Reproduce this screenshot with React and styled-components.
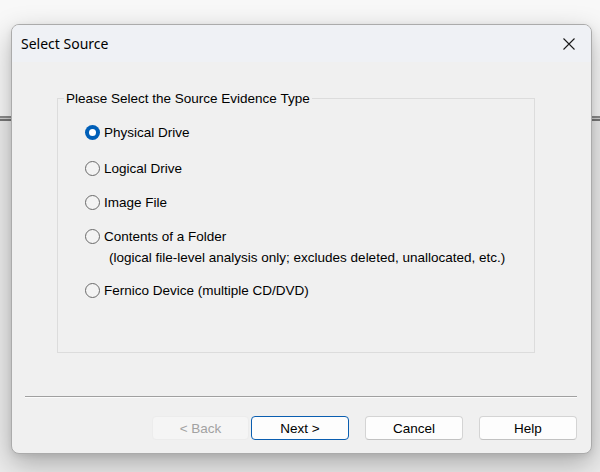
import React, { useState } from 'react';
import styled, { createGlobalStyle } from 'styled-components';

const GlobalStyle = createGlobalStyle`
    html, body {
        margin: 0;
        padding: 0;
    }
    body {
        font-family: "Liberation Sans", Arial, sans-serif;
        font-size: 13.5px;
        color: #000;
    }
`;

const Desktop = styled.div`
    width: 600px;
    height: 472px;
    box-sizing: border-box;
    padding: 24px 0 0 11px;
    overflow: hidden;
    background: linear-gradient(
        #f8f8f8 0 116px,
        #8c8c8c 116px 118px,
        #d2d2d2 118px 119px,
        #777 119px 121px,
        #ececec 121px 100%
    );
`;

const Dialog = styled.div`
    width: 581px;
    height: 430px;
    box-sizing: border-box;
    border: 1px solid #ababab;
    border-radius: 8px;
    background: #f0f0f0;
    box-shadow: 0 10px 28px rgba(0, 0, 0, 0.28), 0 2px 6px rgba(0, 0, 0, 0.08);
    display: flex;
    flex-direction: column;
    overflow: hidden;
`;

const TitleBar = styled.div`
    height: 37px;
    flex: none;
    display: flex;
    align-items: center;
    justify-content: space-between;
    padding: 0 15px 0 9px;
    background: #eff1f5;
`;

const Title = styled.span`
    font-family: "Noto Sans", "Open Sans", sans-serif;
    font-size: 14px;
    color: #000;
`;

const CloseButton = styled.button`
    width: 14px;
    height: 14px;
    padding: 0;
    border: none;
    background: none;
    display: flex;
    align-items: center;
    justify-content: center;
    cursor: pointer;
`;

const GroupBox = styled.fieldset`
    margin: 29px 56px 0 45px;
    padding: 0;
    height: 262px;
    box-sizing: border-box;
    border: 1px solid #dcdcdc;
    min-width: 0;
`;

const GroupTitle = styled.legend`
    margin-left: 6px;
    padding: 0 2px;
    line-height: 15px;
    font-size: 13.5px;
`;

const OptionList = styled.div`
    display: flex;
    flex-direction: column;
    padding: 16px 0 0 27px;
`;

const Option = styled.label`
    display: flex;
    flex-direction: column;
    margin-top: ${(p) => p.$space}px;
    cursor: default;
`;

const OptionRow = styled.span`
    display: flex;
    align-items: center;
    height: 20px;
    gap: 4px;
`;

const RadioCircle = styled.span`
    width: 15px;
    height: 15px;
    box-sizing: border-box;
    border-radius: 50%;
    flex: none;
    display: flex;
    align-items: center;
    justify-content: center;
    border: ${(p) => (p.$checked ? 'none' : '1px solid #6a6a6a')};
    background: ${(p) => (p.$checked ? '#005fb8' : '#f3f3f3')};

    &::after {
        content: '';
        display: ${(p) => (p.$checked ? 'block' : 'none')};
        width: 7px;
        height: 7px;
        border-radius: 50%;
        background: #fff;
    }
`;

const OptionNote = styled.span`
    display: block;
    height: 20px;
    line-height: 20px;
    margin-top: 2px;
    padding-left: 24px;
`;

const Separator = styled.div`
    margin: 43px 14px 0 13px;
    height: 0;
    border-top: 1px solid #a0a0a0;
    border-bottom: 1px solid #fbfbfb;
`;

const ButtonRow = styled.div`
    display: flex;
    justify-content: flex-end;
    margin-top: 18px;
    padding-right: 14px;
`;

const DialogButton = styled.button`
    width: ${(p) => p.$w || 98}px;
    height: 24px;
    margin-left: ${(p) => p.$gap || 0}px;
    box-sizing: border-box;
    border-radius: 4px;
    font-family: "Liberation Sans", Arial, sans-serif;
    font-size: 13.5px;
    padding: 0;
    color: #000;
    background: #fdfdfd;
    border: 1px solid #d4d4d4;
    border-bottom-color: #c2c2c2;

    ${(p) => p.$primary && `
        border: 1px solid #0a5eb0;
    `}

    &:disabled {
        background: #f5f5f5;
        border-color: #ececec;
        color: #a2a2a2;
    }
`;

const options = [
    { id: 'physical', label: 'Physical Drive', space: 0 },
    { id: 'logical', label: 'Logical Drive', space: 16 },
    { id: 'image', label: 'Image File', space: 14 },
    {
        id: 'folder',
        label: 'Contents of a Folder',
        note: '(logical file-level analysis only; excludes deleted, unallocated, etc.)',
        space: 14,
    },
    { id: 'fernico', label: 'Fernico Device (multiple CD/DVD)', space: 12 },
];

const App = () => {
    const [source, setSource] = useState('physical');

    return (
        <Desktop>
            <GlobalStyle />
            <Dialog>
                <TitleBar>
                    <Title>Select Source</Title>
                    <CloseButton aria-label="Close">
                        <svg width="14" height="14" viewBox="0 0 14 14">
                            <path d="M1.5 1.5 L12.5 12.5 M12.5 1.5 L1.5 12.5" stroke="#1a1a1a" strokeWidth="1.1" fill="none" />
                        </svg>
                    </CloseButton>
                </TitleBar>

                <GroupBox>
                    <GroupTitle>Please Select the Source Evidence Type</GroupTitle>
                    <OptionList>
                        {options.map((o) => (
                            <Option key={o.id} $space={o.space} onClick={() => setSource(o.id)}>
                                <OptionRow>
                                    <RadioCircle $checked={source === o.id} />
                                    {o.label}
                                </OptionRow>
                                {o.note && <OptionNote>{o.note}</OptionNote>}
                            </Option>
                        ))}
                    </OptionList>
                </GroupBox>

                <Separator />

                <ButtonRow>
                    <DialogButton $w={97} disabled>&lt; Back</DialogButton>
                    <DialogButton $gap={2} $primary>Next &gt;</DialogButton>
                    <DialogButton $gap={16}>Cancel</DialogButton>
                    <DialogButton $gap={16}>Help</DialogButton>
                </ButtonRow>
            </Dialog>
        </Desktop>
    );
};

export default App;
